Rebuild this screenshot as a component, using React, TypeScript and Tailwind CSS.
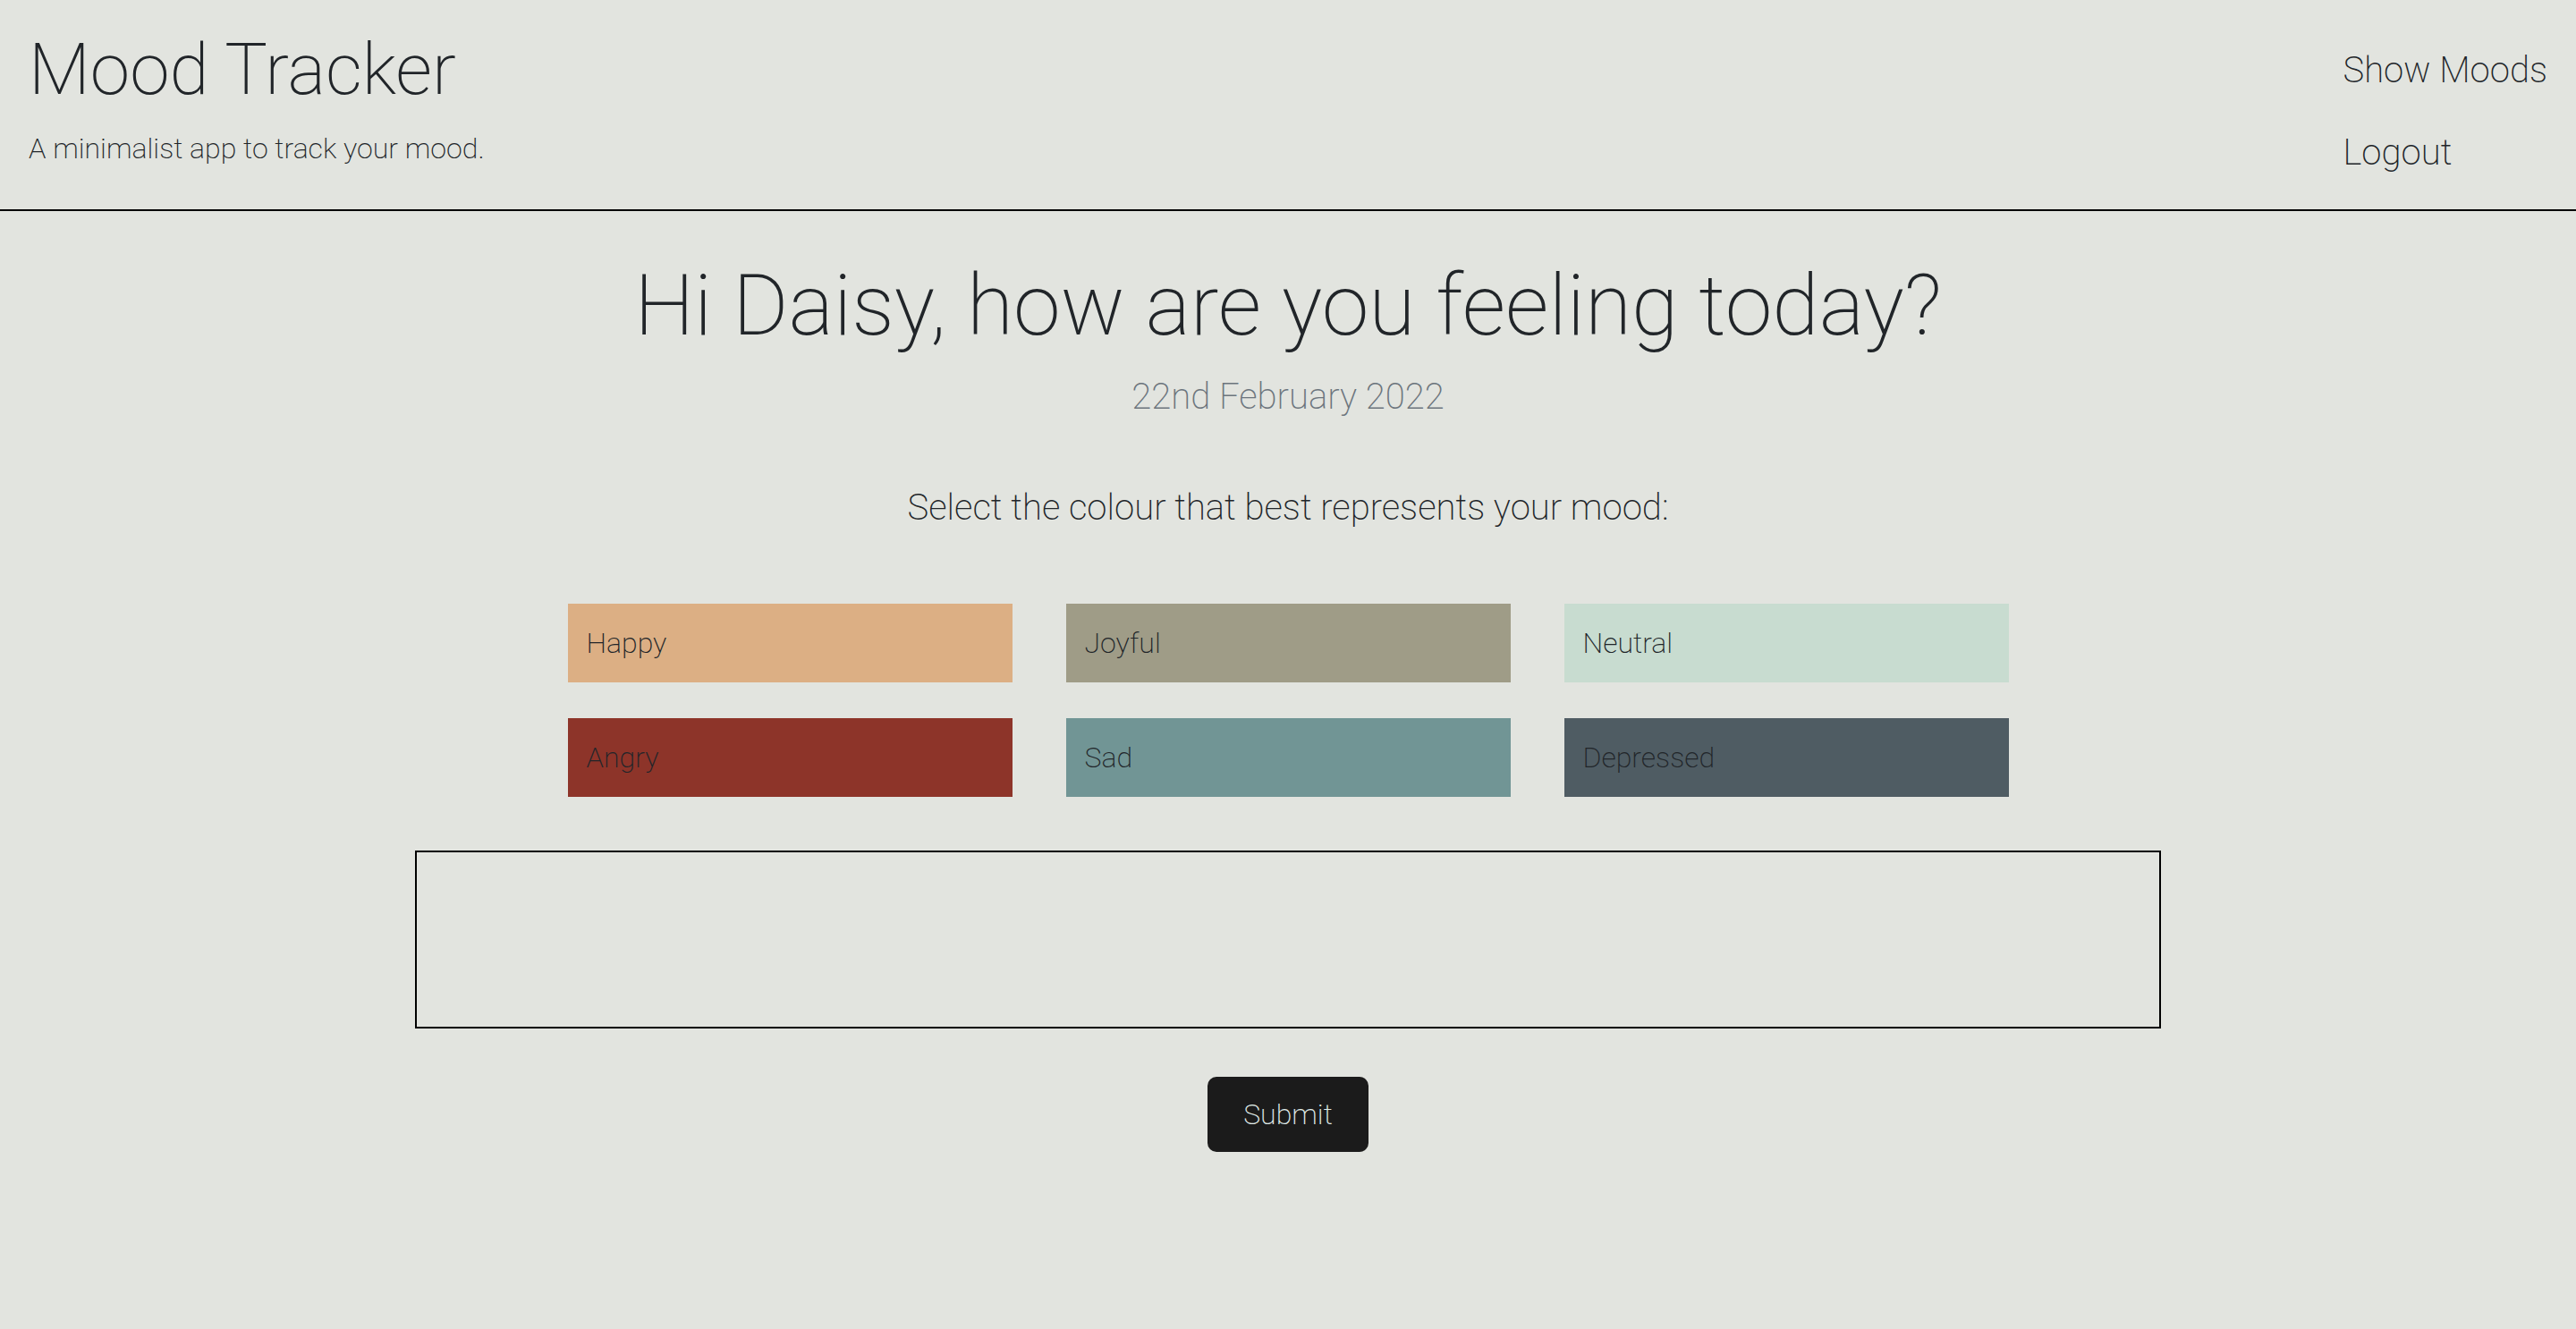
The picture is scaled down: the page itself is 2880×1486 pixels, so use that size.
import React from "react";

const moods = [
  { name: "Happy", bg: "bg-[#dcaf84]" },
  { name: "Joyful", bg: "bg-[#9f9c87]" },
  { name: "Neutral", bg: "bg-[#c8dcd0]" },
  { name: "Angry", bg: "bg-[#8d3429]" },
  { name: "Sad", bg: "bg-[#719595]" },
  { name: "Depressed", bg: "bg-[#4f5c63]" },
];

export default function App() {
  return (
    <div
      className="min-h-screen w-full bg-[#e2e4df] text-[#212529] font-extralight"
      style={{ fontFamily: "Roboto, 'Liberation Sans', sans-serif" }}
    >
      <header className="flex justify-between border-b-2 border-black px-[32px] h-[236px]">
        <div className="flex flex-col">
          <h1 className="text-[80px] leading-[80px] pt-[38px] font-extralight">Mood Tracker</h1>
          <p className="text-[32px] leading-[32px] mt-[32px]">A minimalist app to track your mood.</p>
        </div>
        <nav className="flex flex-col items-start pt-[59px] gap-[52px]">
          <a className="text-[40px] leading-[40px] cursor-pointer">Show Moods</a>
          <a className="text-[40px] leading-[40px] cursor-pointer">Logout</a>
        </nav>
      </header>
      <main className="flex flex-col items-center">
        <h2 className="text-[95px] leading-[95px] mt-[58px] font-extralight">Hi Daisy, how are you feeling today?</h2>
        <p className="text-[40px] leading-[40px] mt-[35px] text-[#6c757d]">22nd February 2022</p>
        <p className="text-[40px] leading-[40px] mt-[84px]">Select the colour that best represents your mood:</p>
        <div className="grid grid-cols-[497px_497px_497px] gap-x-[60px] gap-y-[40px] mt-[87px]">
          {moods.map((m) => (
            <button
              key={m.name}
              className={`${m.bg} h-[88px] flex items-center px-[21px] text-[32px] text-[#212529] text-left font-extralight`}
            >
              {m.name}
            </button>
          ))}
        </div>
        <textarea className="mt-[60px] w-[1952px] h-[199px] border-2 border-black bg-transparent resize-none outline-none" />
        <button className="mt-[54px] w-[180px] h-[84px] rounded-[10px] bg-[#1b1b1b] text-[#e0ebe9] text-[32px] font-extralight">
          Submit
        </button>
      </main>
    </div>
  );
}
